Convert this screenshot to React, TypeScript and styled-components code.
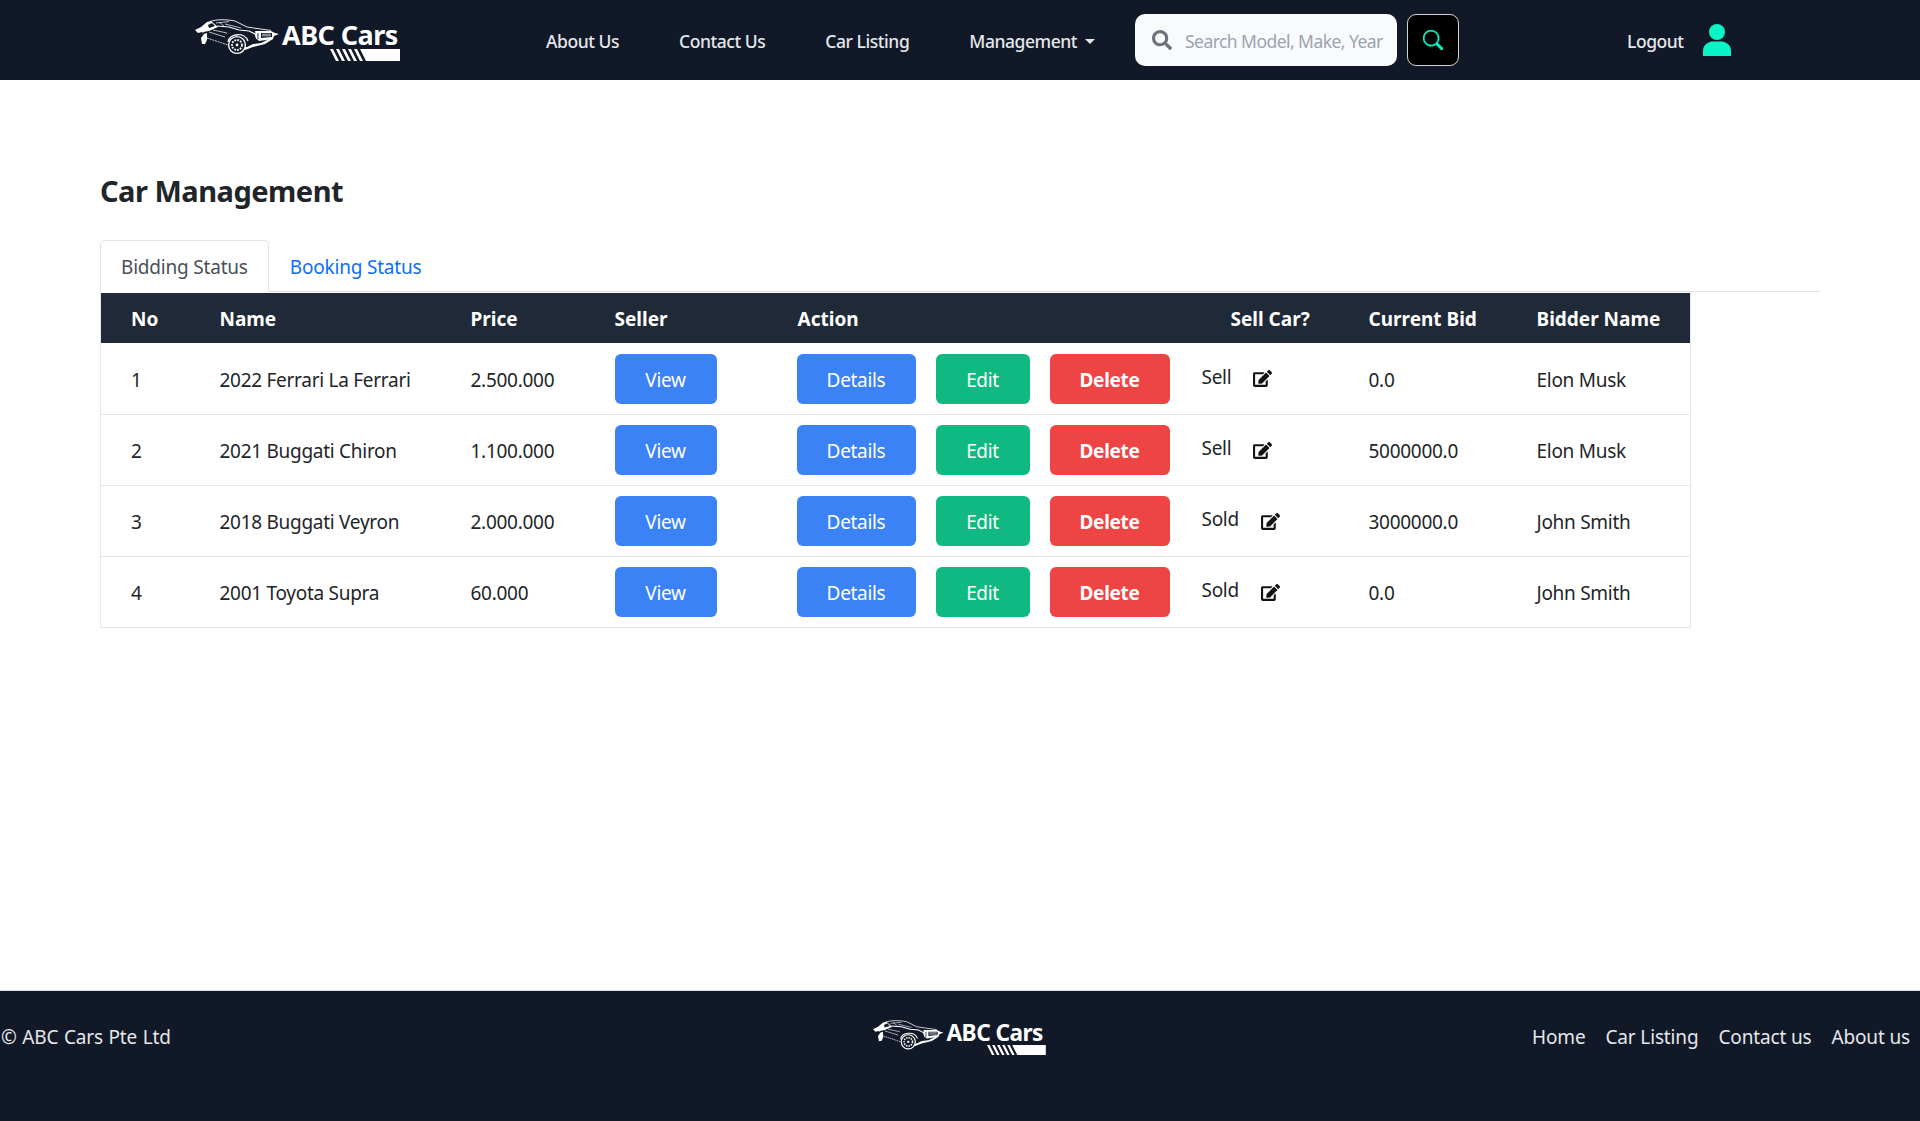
import React from "react";
import styled, { createGlobalStyle } from "styled-components";
import { FaSearch, FaEdit } from "react-icons/fa";
import { BsSearch } from "react-icons/bs";

const Global = createGlobalStyle`
  html, body { margin: 0; padding: 0; background: #fff; }
  body { font-family: "Noto Sans", "Liberation Sans", sans-serif; color: #212529; }
  * { box-sizing: border-box; }
`;
const Page = styled.div`display: flex; flex-direction: column; min-height: 1121px;`;
const Nav = styled.header`
  height: 80px; background: #111827; display: flex; align-items: center; padding-left: 195px; flex: none;
`;
const LogoWrap = styled.div<{ $w: number; $h: number }>`
  position: relative; width: ${p => p.$w}px; height: ${p => p.$h}px; flex: none; color: #fff;
`;
const LogoName = styled.span<{ $size: number; $left: number; $top: number }>`
  position: absolute; left: ${p => p.$left}px; top: ${p => p.$top}px; font-size: ${p => p.$size}px; font-weight: 700;
  line-height: 1.2; white-space: nowrap; letter-spacing: -0.55px;
`;
const NavLinks = styled.nav`display: flex; align-items: center; margin-left: 146px; gap: 60px; padding-top: 2px;`;
const NavLink = styled.a`
  color: #e5e7eb; font-size: 17.5px; font-weight: 500; letter-spacing: -0.45px; white-space: nowrap; display: flex; align-items: center;
`;
const Caret = styled.span`
  margin-left: 8px; border-top: 5px solid #e5e7eb; border-left: 5px solid transparent; border-right: 5px solid transparent;
`;
const SearchBox = styled.div`
  width: 262px; height: 52px; background: #f9fafb; border-radius: 10px; display: flex; align-items: center; padding-left: 17px; gap: 13px; margin-left: 40px; flex: none;
  color: #6b7280;
`;
const Placeholder = styled.span`font-size: 17.5px; color: #9ca3af; letter-spacing: -0.55px; white-space: nowrap; padding-top: 2px;`;
const SearchBtn = styled.button`
  width: 52px; height: 52px; background: #000; border: 1px solid #d1d5db; border-radius: 9px; margin-left: 10px; color: #0af5c5;
  display: flex; align-items: center; justify-content: center; padding: 0; flex: none;
`;
const Account = styled.div`display: flex; align-items: center; margin-left: 168px; gap: 19px;`;
const LogoutLink = styled(NavLink)`padding-top: 2px;`;
const Main = styled.main`flex: 1; padding: 90px 100px 0;`;
const Title = styled.h1`font-size: 29px; line-height: 42px; font-weight: 700; margin: 0 0 28px; letter-spacing: -0.5px; color: #212529;`;
const Tabs = styled.div`display: flex; width: 1720px; border-bottom: 1px solid #dee2e6; height: 52px;`;
const Tab = styled.div<{ $active?: boolean }>`
  height: 52px; padding: 2px 20px 0; display: flex; align-items: center; font-size: 19px; letter-spacing: -0.2px; white-space: nowrap;
  color: ${p => (p.$active ? "#495057" : "#0d6efd")};
  background: ${p => (p.$active ? "#fff" : "transparent")};
  border: 1px solid ${p => (p.$active ? "#dee2e6" : "transparent")};
  border-bottom-color: ${p => (p.$active ? "#fff" : "transparent")};
  border-radius: 5px 5px 0 0;
`;
const Table = styled.table`
  width: 1590px; border-collapse: collapse; table-layout: fixed; font-size: 19px; letter-spacing: -0.28px;
  border-left: 1px solid #e5e7eb; border-right: 1px solid #e5e7eb; margin-top: 1px;
`;
const Th = styled.th<{ $pad?: number }>`
  background: #1f2937; color: #fff; height: 50px; padding: 2px 0 0 ${p => p.$pad ?? 30}px; text-align: left; font-weight: 700; white-space: nowrap; letter-spacing: 0;
`;
const Tr = styled.tr`border-bottom: 1px solid #e5e7eb;`;
const Td = styled.td`height: 71px; padding: 1px 0 0 30px; white-space: nowrap; color: #212529;`;
const TextTd = styled(Td)`padding-top: 3px;`;
const Actions = styled.div`display: flex; gap: 20px;`;
const Btn = styled.button<{ $bg: string; $w: number; $bold?: boolean }>`
  width: ${p => p.$w}px; height: 50px; border: 0; border-radius: 6px; color: #fff; background: ${p => p.$bg};
  font: ${p => (p.$bold ? 700 : 400)} 19px "Noto Sans", sans-serif; letter-spacing: -0.32px; padding: 2px 0 0;
`;
const SellWrap = styled.div`display: flex; align-items: center; gap: 22px; color: #212529;`;
const SellText = styled.span`position: relative; top: -2px;`;
const Footer = styled.footer`
  height: 131px; background: #111827; color: #e5e7eb; display: grid; grid-template-columns: 1fr auto 1fr; padding: 24px 10px 0 1px; flex: none;
  font-size: 19px; letter-spacing: -0.15px; border-top: 1px solid #d8dce2;
`;
const Copy = styled.div`line-height: 44px; word-spacing: 0.8px;`;
const FooterLinks = styled.div`display: flex; justify-content: flex-end; gap: 20px; line-height: 44px; white-space: nowrap;`;
const FooterLogo = styled.div`margin: 5px 0 0 8px;`;

const Car = ({ w }: { w: number }) => (
  <svg width={w} viewBox="0 0 84 36" fill="none" style={{ position: "absolute", left: 0, top: 0 }}>
    <path fill="#fff" d="M0 11 L6 8 L12 3 L16 2 L23 8 L14 12 L8 13 L9 15 L7 13 L3 14 Z" />
    <path fill="#fff" d="M9 15 L12 14 L12 21 L10 25 L7 25 L6 19 Z" />
    <path fill="#111827" d="M13 6 L17 4 L20 7 L14 9 Z" />
    <path stroke="#fff" strokeWidth="0.9" d="M15 2.500 C22 0 32 0.500 40 2 L52 8 L62 9.500 L76 11.500" />
    <path stroke="#fff" strokeWidth="1.2" d="M22 7 L34 8 L44 11 L54 12 L60 15 L62 20" />
    <path stroke="#fff" strokeWidth="0.7" d="M24 3 L29 7 M21 4 L34 2.600 M30 5 L46 9 M18 11 L32 14 M14 13 L30 18" />
    <path stroke="#fff" strokeWidth="0.8" strokeDasharray="2 0.8" d="M12 19 L33 26" />
    <path fill="#fff" d="M47 29 L52 28 L58 25 L66 24 L76 19 L78 20 L70 25 L58 28 L50 31 Z" />
    <path fill="#fff" d="M60 12 L76 12 L80 14 L84 15 L79 17 L78 20 L64 22 L61 19 Z" />
    <path fill="#111827" d="M66 14 L77 14 L77 18 L66 19 Z" />
    <path stroke="#fff" strokeWidth="0.7" d="M67 15.200 H76 M67 16.800 H76" />
    <path stroke="#111827" strokeWidth="0.9" d="M63 14 V20" />
    <path stroke="#fff" strokeWidth="1.3" d="M33 23 C34 14 50 13 53 22" />
    <circle cx="42" cy="26" r="8.4" fill="#111827" stroke="#fff" strokeWidth="1.4" />
    <circle cx="42" cy="26" r="5" stroke="#fff" strokeWidth="1.8" strokeDasharray="1.8 1.100" />
    <circle cx="42" cy="26" r="1.4" fill="#fff" />
  </svg>
);
const Stripes = ({ w, x, y }: { w: number; x: number; y: number }) => (
  <svg width={w} viewBox="0 0 70 12" style={{ position: "absolute", left: x, top: y }}>
    <path fill="#fff" d="M0 0 H3 L9 12 H6 Z M6 0 H9 L15 12 H12 Z M12 0 H15 L21 12 H18 Z M18 0 H21 L27 12 H24 Z M24 0 H27 L33 12 H30 Z M30 0 H70 V12 H36 Z" />
  </svg>
);
const Logo = ({ scale, top }: { scale: number; top: number }) => (
  <LogoWrap $w={205 * scale} $h={42 * scale}>
    <Car w={84 * scale} />
    <LogoName $size={27 * scale} $left={87 * scale} $top={top}>ABC Cars</LogoName>
    <Stripes w={70 * scale} x={135 * scale} y={30 * scale} />
  </LogoWrap>
);
const UserIcon = () => (
  <svg width="28" height="32" viewBox="0 0 28 32" fill="#0af5c5">
    <ellipse cx="14" cy="8" rx="8" ry="8" />
    <path d="M0 32 V27 C0 20 6 17.500 10 17.500 H18 C22 17.500 28 20 28 27 V32 Z" />
  </svg>
);

const rows = [
  ["1", "2022 Ferrari La Ferrari", "2.500.000", "Sell", "0.0", "Elon Musk"],
  ["2", "2021 Buggati Chiron", "1.100.000", "Sell", "5000000.0", "Elon Musk"],
  ["3", "2018 Buggati Veyron", "2.000.000", "Sold", "3000000.0", "John Smith"],
  ["4", "2001 Toyota Supra", "60.000", "Sold", "0.0", "John Smith"],
];
const widths = [89, 251, 144, 182, 405, 167, 168, 184];

export default function App() {
  return (
    <Page>
      <Global />
      <Nav>
        <Logo scale={1} top={0} />
        <NavLinks>
          <NavLink>About Us</NavLink>
          <NavLink>Contact Us</NavLink>
          <NavLink>Car Listing</NavLink>
          <NavLink>Management<Caret /></NavLink>
        </NavLinks>
        <SearchBox>
          <FaSearch size={20} />
          <Placeholder>Search Model, Make, Year</Placeholder>
        </SearchBox>
        <SearchBtn><BsSearch size={20} strokeWidth={0.4} /></SearchBtn>
        <Account>
          <LogoutLink>Logout</LogoutLink>
          <UserIcon />
        </Account>
      </Nav>
      <Main>
        <Title>Car Management</Title>
        <Tabs>
          <Tab $active>Bidding Status</Tab>
          <Tab>Booking Status</Tab>
        </Tabs>
        <Table>
          <colgroup>{widths.map((w, i) => <col key={i} width={w} />)}</colgroup>
          <thead>
            <tr>
              <Th>No</Th><Th>Name</Th><Th>Price</Th><Th>Seller</Th><Th $pad={31}>Action</Th>
              <Th $pad={59}>Sell Car?</Th><Th>Current Bid</Th><Th>Bidder Name</Th>
            </tr>
          </thead>
          <tbody>
            {rows.map(r => (
              <Tr key={r[0]}>
                <TextTd>{r[0]}</TextTd>
                <TextTd>{r[1]}</TextTd>
                <TextTd>{r[2]}</TextTd>
                <Td><Btn $bg="#3b82f6" $w={102}>View</Btn></Td>
                <Td>
                  <Actions>
                    <Btn $bg="#3b82f6" $w={119}>Details</Btn>
                    <Btn $bg="#10b981" $w={94}>Edit</Btn>
                    <Btn $bg="#ef4444" $w={120} $bold>Delete</Btn>
                  </Actions>
                </Td>
                <Td>
                  <SellWrap><SellText>{r[3]}</SellText><FaEdit size={19} color="#111" /></SellWrap>
                </Td>
                <TextTd>{r[4]}</TextTd>
                <TextTd>{r[5]}</TextTd>
              </Tr>
            ))}
          </tbody>
        </Table>
      </Main>
      <Footer>
        <Copy>© ABC Cars Pte Ltd</Copy>
        <FooterLogo><Logo scale={0.84} top={-1} /></FooterLogo>
        <FooterLinks><span>Home</span><span>Car Listing</span><span>Contact us</span><span>About us</span></FooterLinks>
      </Footer>
    </Page>
  );
}
